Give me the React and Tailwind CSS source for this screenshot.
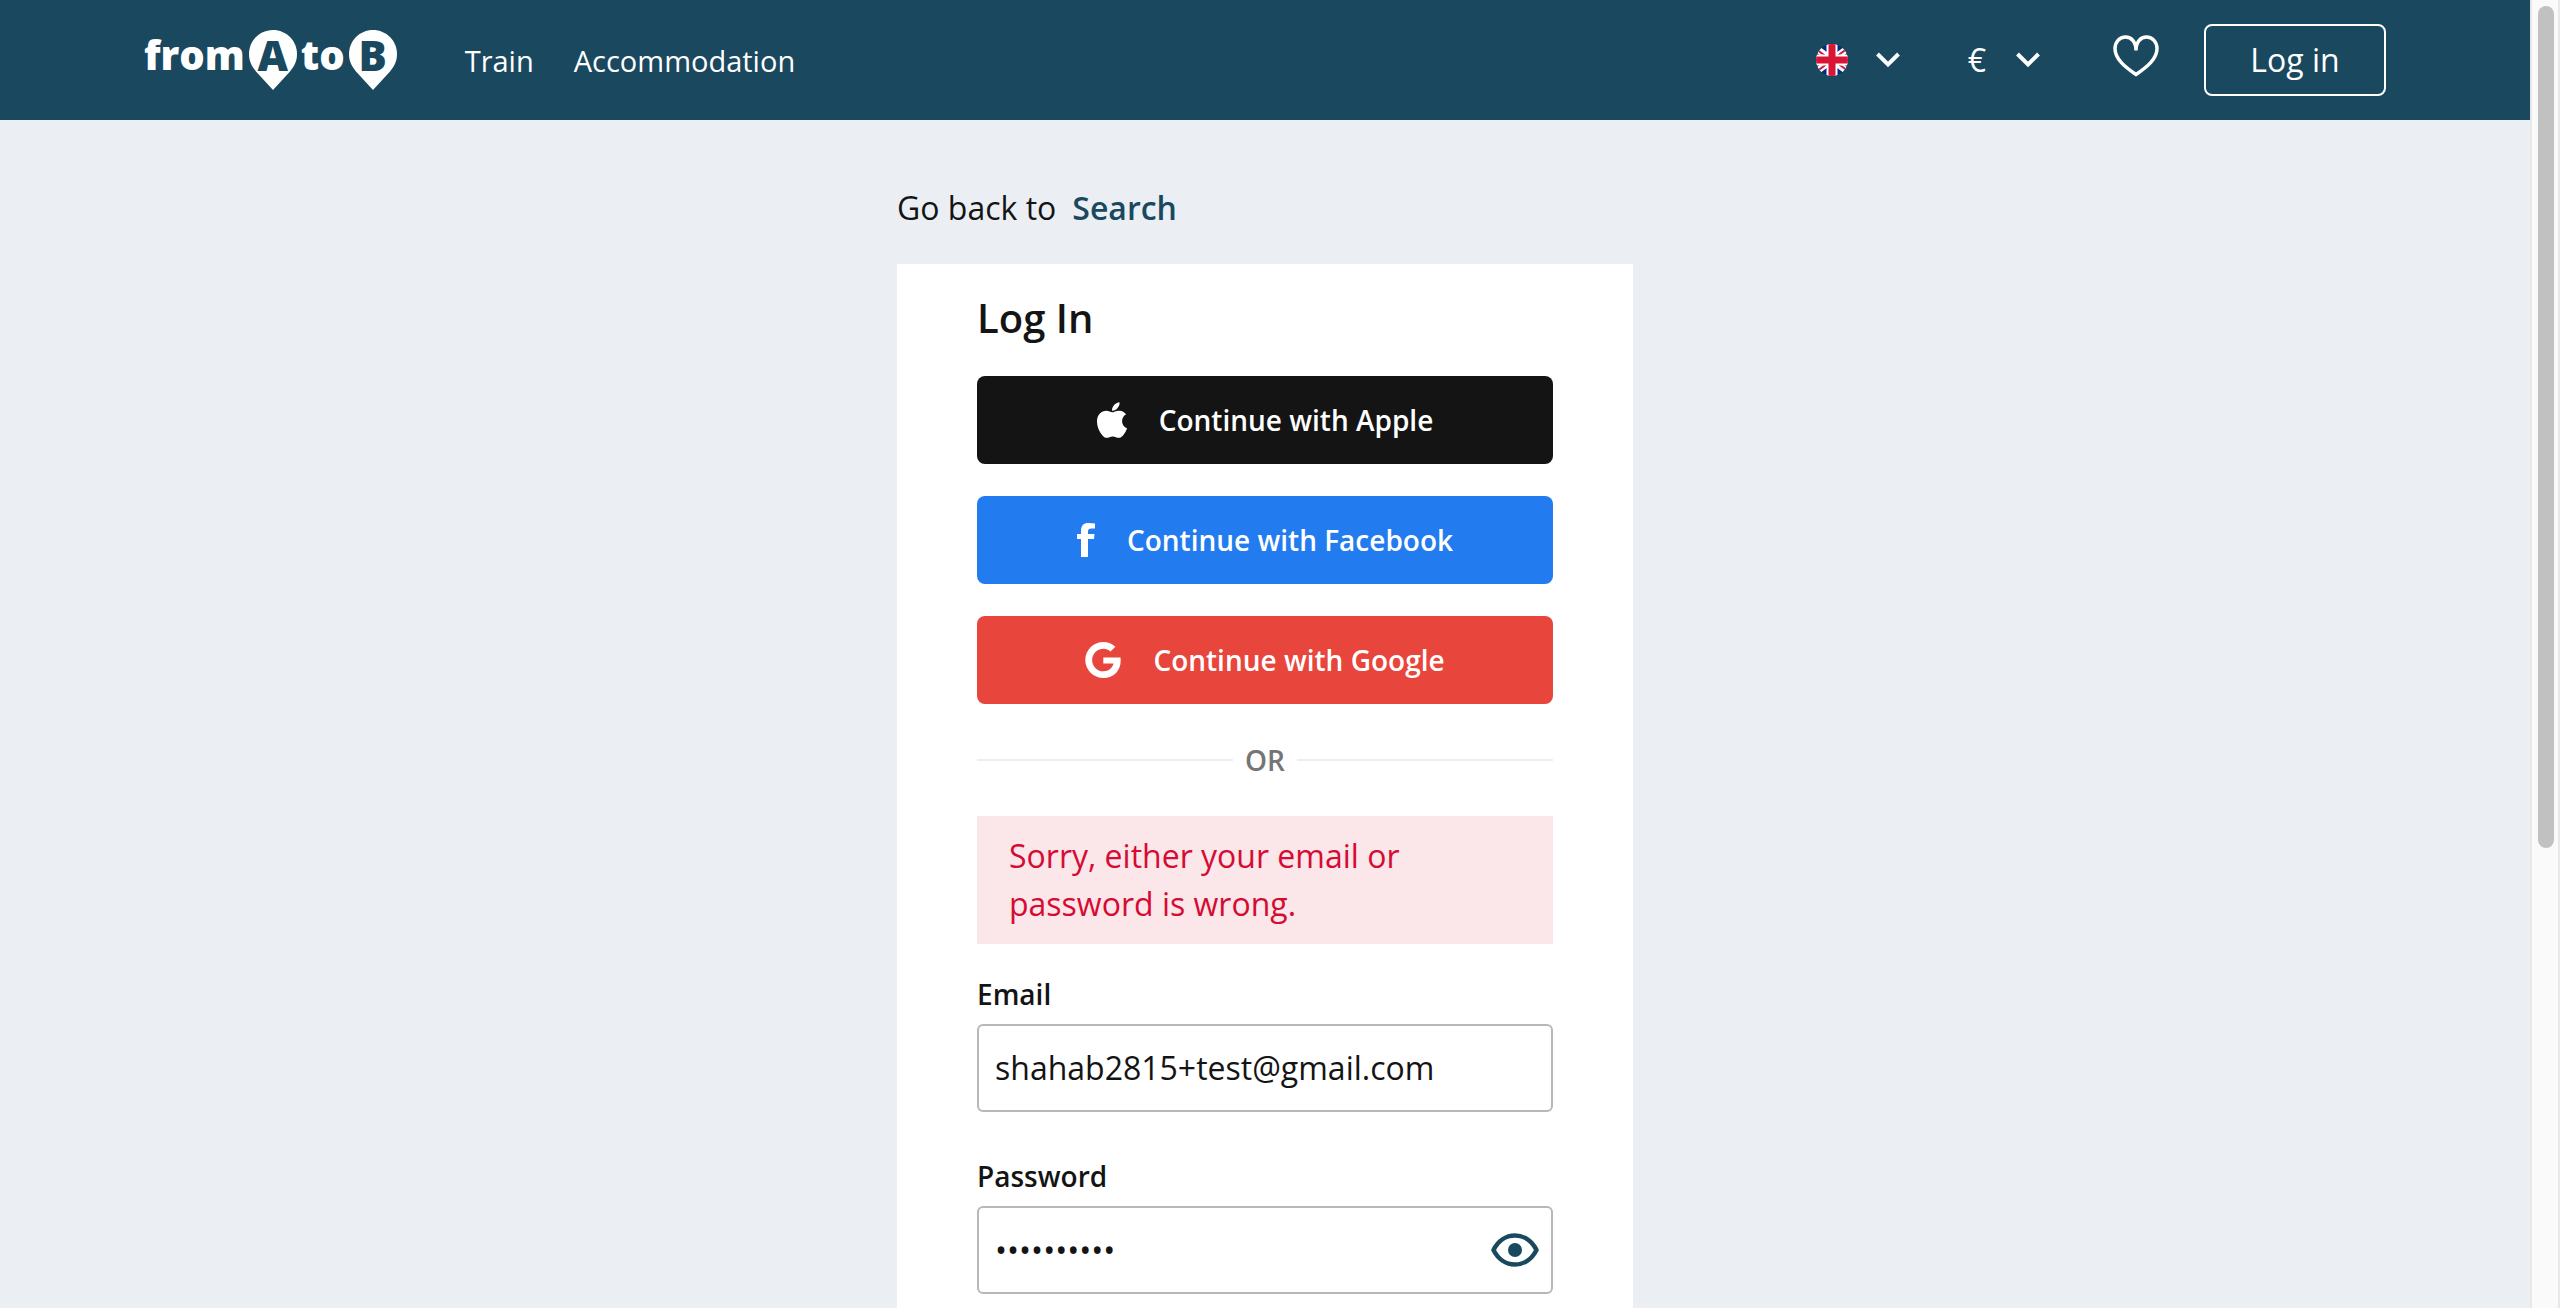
import React from "react";

function Pin({ letter }) {
  return (
    <span className="relative h-[60px] w-12 shrink-0">
      <svg viewBox="0 0 48 60" className="h-full w-full" aria-hidden="true">
        <path d="M24 0C10.700 0 0 10.700 0 24c0 7.500 3 12.500 7 17.500L24 60l17-18.500c4-5 7-10 7-17.500C48 10.700 37.300 0 24 0Z" fill="#fff" />
      </svg>
      <span className="absolute inset-x-0 top-0 text-center text-[42px] leading-[49px] text-[#19485f]">{letter}</span>
    </span>
  );
}

function Logo() {
  return (
    <a href="#" aria-label="from A to B" className="flex items-start font-['Open_Sans',sans-serif] text-[40px] leading-[49px] font-extrabold text-white">
      <span>from</span>
      <span className="ml-1 flex"><Pin letter="A" /></span>
      <span className="ml-1">to</span>
      <span className="ml-1 flex"><Pin letter="B" /></span>
    </a>
  );
}

function Chevron() {
  return (
    <svg viewBox="0 0 24 16" className="h-4 w-6" fill="none" stroke="currentColor" strokeWidth="4" aria-hidden="true">
      <path d="M1.500 2 12 12.500 22.500 2" />
    </svg>
  );
}

function Flag() {
  return (
    <svg viewBox="0 0 64 64" className="h-8 w-8" aria-hidden="true">
      <clipPath id="round"><circle cx="32" cy="32" r="32" /></clipPath>
      <g clipPath="url(#round)">
        <rect width="64" height="64" fill="#012a86" />
        <path d="M-11 0L75 64M75 0L-11 64" stroke="#fff" strokeWidth="13" />
        <path d="M-11 2L32 34M75 0L32 32M32 32L-11 64M32 30L75 62" stroke="#d81437" strokeWidth="4" />
        <path d="M32 0v64M0 32h64" stroke="#fff" strokeWidth="22" />
        <path d="M32 0v64M0 32h64" stroke="#d81437" strokeWidth="14" />
      </g>
    </svg>
  );
}

function Header() {
  return (
    <header className="flex h-[120px] items-center bg-[#19485f] px-36 text-white">
      <Logo />
      <nav className="ml-[68px] flex gap-10 pt-0.5 text-[29px] leading-10">
        <a href="#">Train</a>
        <a href="#">Accommodation</a>
      </nav>
      <div className="ml-auto flex items-center">
        <button type="button" aria-label="Language" className="flex items-center gap-7"><Flag /><Chevron /></button>
        <button type="button" aria-label="Currency" className="ml-[68px] flex items-center gap-[30px] text-[32px] leading-10">€<Chevron /></button>
        <a href="#" aria-label="Favourites" className="mb-2 ml-[73px]">
          <svg viewBox="0 0 46 42" className="h-[42px] w-[46px]" fill="none" stroke="currentColor" strokeWidth="3.500" aria-hidden="true">
            <path d="M23 15.500C23 7 18.500 2 12.500 2 6.500 2 2 7 2 13.500 2 24 12 32 23 39.500 34 32 44 24 44 13.500 44 7 39.500 2 33.500 2 27.500 2 23 7 23 15.500Z" />
          </svg>
        </a>
        <button type="button" className="ml-[45px] h-[72px] w-[182px] rounded-lg border-2 border-white text-[32px] leading-10">Log in</button>
      </div>
    </header>
  );
}

function AppleIcon() {
  return (
    <svg viewBox="4 32 376 448" className="h-9 w-[30px]" fill="currentColor" aria-hidden="true">
      <path d="M318.700 268.700c-.2-36.700 16.400-64.400 50-84.800-18.800-26.900-47.200-41.700-84.700-44.600-35.500-2.800-74.300 20.700-88.500 20.700-15 0-49.400-19.700-76.400-19.700C63.300 141.200 4 184.800 4 273.500q0 39.300 14.400 81.200c12.800 36.700 59 126.700 107.200 125.200 25.200-.6 43-17.900 75.800-17.900 31.800 0 48.300 17.900 76.400 17.900 48.600-.7 90.400-82.500 102.600-119.300-65.200-30.700-61.700-90-61.700-91.900zm-56.600-164.200c27.300-32.400 24.800-61.900 24-72.500-24.100 1.400-52 16.400-67.900 34.900-17.500 19.800-27.800 44.300-25.600 71.900 26.100 2 49.900-11.400 69.500-34.300z" />
    </svg>
  );
}

function FacebookIcon() {
  return (
    <svg viewBox="0 0 18 34" className="h-[34px] w-[18px]" fill="currentColor" aria-hidden="true">
      <path d="M4 34V16H0v-5h4V8C4 2.500 6.500 0 11.500 0c2.500 0 4.500.2 6.500.5V5.500h-3.500c-2.500 0-3.500 1-3.500 3V11h6.500L17 16h-6v18Z" />
    </svg>
  );
}

function GoogleIcon() {
  return (
    <svg viewBox="0 8 488 496" className="h-9 w-9" fill="currentColor" aria-hidden="true">
      <path d="M488 261.800C488 403.300 391.100 504 248 504 110.800 504 0 393.200 0 256S110.800 8 248 8c66.800 0 123 24.500 166.300 64.900l-67.500 64.900C258.500 52.600 94.300 116.600 94.300 256c0 86.500 69.100 156.600 153.700 156.600 98.200 0 135-70.400 140.800-106.900H248v-85.300h236.100c2.300 12.700 3.900 24.900 3.900 41.400z" />
    </svg>
  );
}

function SocialButton({ icon, color, children }) {
  return (
    <button type="button" className={`flex h-[88px] w-full items-center justify-center gap-8 rounded-lg text-[28px] leading-10 font-semibold text-white ${color}`}>
      {icon}
      {children}
    </button>
  );
}

function Field({ id, label, type, value, children }) {
  return (
    <div>
      <label htmlFor={id} className="block text-[28px] leading-9 font-semibold">{label}</label>
      <div className="mt-3 flex h-[88px] items-center rounded-md border-2 border-[#b8b8b8] pr-3 pl-4">
        <input id={id} type={type} defaultValue={value} className="min-w-0 flex-1 text-[32px] leading-10 outline-none" />
        {children}
      </div>
    </div>
  );
}

export default function App() {
  return (
    <div className="flex h-screen overflow-hidden bg-[#ebeff3] font-['Open_Sans',sans-serif] text-[#141414]">
      <div className="flex-1">
        <Header />
        <main className="mx-auto w-[736px] pt-16">
          <p className="flex gap-4 text-[32px] leading-12">
            Go back to <a href="#" className="font-semibold text-[#19485f]">Search</a>
          </p>
          <section className="mt-8 bg-white px-20 pt-[30px] pb-20">
            <h1 className="text-[40px] leading-12 font-semibold">Log In</h1>
            <div className="mt-[34px] flex flex-col gap-8">
              <SocialButton color="bg-[#141414]" icon={<AppleIcon />}>Continue with Apple</SocialButton>
              <SocialButton color="bg-[#237bf0]" icon={<FacebookIcon />}>Continue with Facebook</SocialButton>
              <SocialButton color="bg-[#e8453c]" icon={<GoogleIcon />}>Continue with Google</SocialButton>
            </div>
            <div className="mt-9 flex items-center gap-3 text-[28px] leading-10 font-semibold text-[#757575]">
              <span className="h-0.5 flex-1 bg-[#ebeff3]" />
              OR
              <span className="h-0.5 flex-1 bg-[#ebeff3]" />
            </div>
            <p role="alert" className="mt-9 bg-[#fbe6e9] px-8 py-4 text-[32px] leading-12 text-[#d60b33]">
              Sorry, either your email or password is wrong.
            </p>
            <form className="mt-8 flex flex-col gap-[46px]">
              <Field id="email" label="Email" type="email" value="shahab2815+test@gmail.com" />
              <Field id="password" label="Password" type="password" value="password12">
                <button type="button" aria-label="Show password" className="text-[#19485f]">
                  <svg viewBox="0 0 48 34" className="h-[34px] w-12" aria-hidden="true">
                    <path d="M2.500 17C7 8 15 2.500 24 2.500S41 8 45.500 17C41 26 33 31.500 24 31.500S7 26 2.500 17Z" fill="none" stroke="currentColor" strokeWidth="4.500" strokeLinejoin="round" />
                    <circle cx="24" cy="17" r="7" fill="currentColor" />
                  </svg>
                </button>
              </Field>
            </form>
          </section>
        </main>
      </div>
      <div className="w-[30px] border-x-2 border-[#e8e8e8] bg-[#fafafa] px-1.5 pt-1.5" aria-hidden="true">
        <div className="h-[842px] w-4 rounded-full bg-[#c1c1c1]" />
      </div>
    </div>
  );
}
